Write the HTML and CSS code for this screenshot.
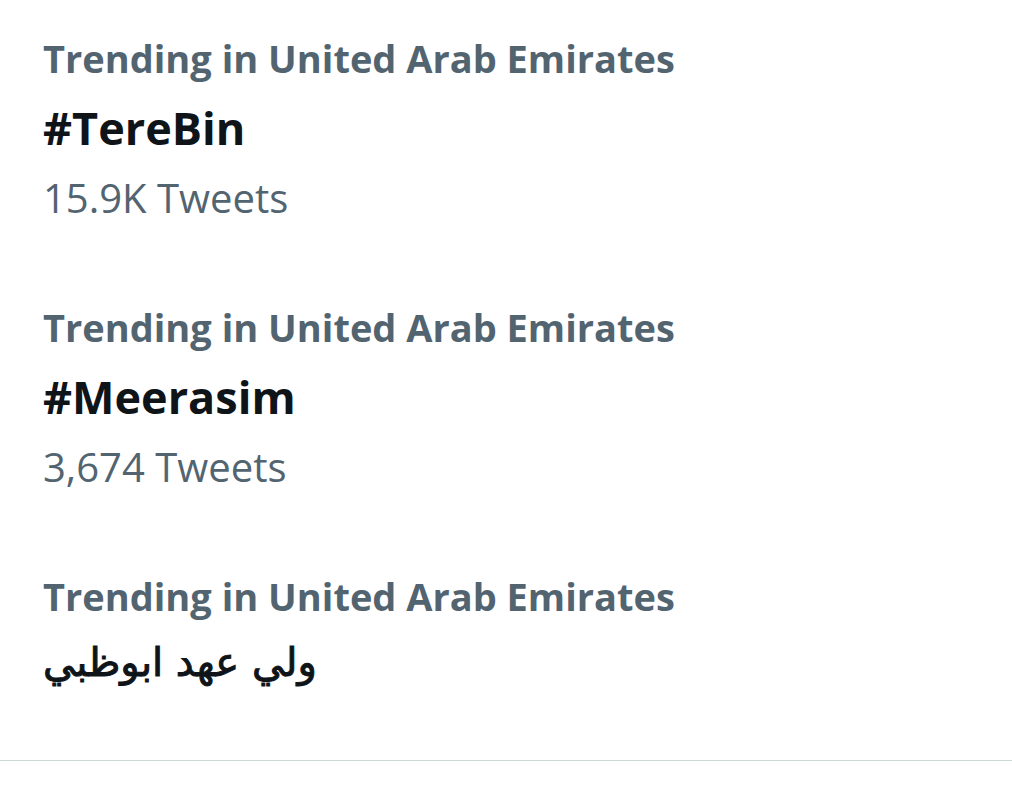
FILE: index.html
```html
<!DOCTYPE html>
<html lang="en">
<head>
    <meta charset="UTF-8">
    <title>Trends</title>
    <link rel="stylesheet" href="styles.css">
</head>
<body>
<ul class="trends">
    <li class="trend">
        <p class="context">Trending in United Arab Emirates</p>
        <h2 class="topic">#TereBin</h2>
        <p class="count">15.9K Tweets</p>
    </li>
    <li class="trend">
        <p class="context">Trending in United Arab Emirates</p>
        <h2 class="topic">#Meerasim</h2>
        <p class="count">3,674 Tweets</p>
    </li>
    <li class="trend">
        <p class="context">Trending in United Arab Emirates</p>
        <h2 class="topic topic-ar" lang="ar">ولي عهد ابوظبي</h2>
    </li>
</ul>
</body>
</html>
```

FILE: styles.css
```css
* {
    margin: 0;
    padding: 0;
    list-style: none;
}

body {
    font-family: "Open Sans", "DejaVu Sans", sans-serif;
    background-color: #fff;
    color: #0f1419;
}

.trends {
    padding-bottom: 29px;
    border-bottom: 1px solid #cbdad9;
}

.trend {
    padding: 24px 43px 37px;
}

.context, .count {
    font-size: 40px;
    line-height: 68px;
    color: #536471;
}

.context {
    font-size: 38px;
    font-weight: 700;
}

.topic {
    font-size: 45px;
    line-height: 72px;
    font-weight: 700;
}

.topic-ar {
    font-family: "DejaVu Sans", sans-serif;
    font-size: 40px;
    line-height: 64px;
    font-weight: 400;
    -webkit-text-stroke: 1px #0f1419;
}
```
